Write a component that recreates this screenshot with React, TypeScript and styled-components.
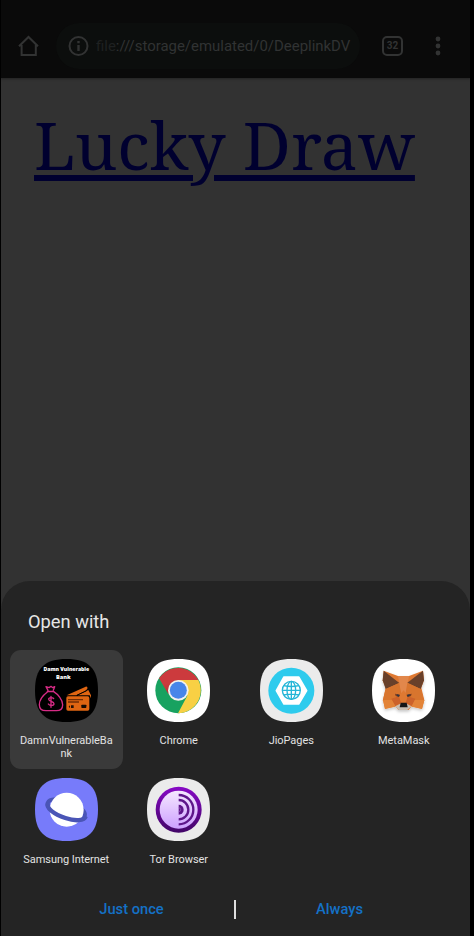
import React from 'react';
import styled, { createGlobalStyle } from 'styled-components';

const GlobalStyle = createGlobalStyle`
  * { box-sizing: border-box; }
  html, body { margin: 0; background: #000; }
`;

const Screen = styled.div`
  width: 469px;
  height: 936px;
  margin-left: 1px;
  display: flex;
  flex-direction: column;
  overflow: hidden;
  background: #323232;
  font-family: Roboto, sans-serif;
`;

const Toolbar = styled.header`
  height: 78px;
  flex: none;
  display: flex;
  align-items: center;
  padding: 14px 0 0 15px;
  background: #0a0a0a;
  box-shadow: 0 1px 2px #222;
  color: #323333;
`;

const ToolbarIcon = styled.svg`
  width: 24px;
  height: 24px;
  flex: none;
  fill: none;
  stroke: currentColor;
  stroke-width: 2;
`;

const AddressBar = styled.div`
  width: 304px;
  height: 46px;
  flex: none;
  margin: 0 22px 0 16px;
  padding-left: 10px;
  display: flex;
  align-items: center;
  border-radius: 23px;
  background: #0c0e0d;
`;

const Address = styled.span`
  width: 256px;
  margin-left: 6px;
  overflow: hidden;
  white-space: nowrap;
  font-size: 14.95px;
  line-height: 20px;
  color: #313333;
`;

const Scheme = styled.span`
  color: #1f2121;
`;

const TabCount = styled.div`
  width: 21px;
  height: 20px;
  margin-right: 32px;
  border: 2px solid currentColor;
  border-radius: 5px;
  font-size: 10px;
  font-weight: 700;
  line-height: 16px;
  text-align: center;
`;

const MenuIcon = styled.svg`
  width: 6px;
  height: 20px;
  fill: currentColor;
`;

const Page = styled.main`
  flex: 1;
  padding: 24px 0 0 33px;
`;

const PageLink = styled.a`
  display: inline-block;
  white-space: nowrap;
  font-family: 'Noto Serif', 'Droid Serif', 'DejaVu Serif Condensed', 'DejaVu Serif', serif;
  font-stretch: condensed;
  font-size: 66.1px;
  line-height: 84px;
  color: #00002f;
  text-decoration: underline;
  text-decoration-thickness: 6px;
  text-underline-offset: 5px;
`;

const Sheet = styled.section`
  height: 355px;
  flex: none;
  display: flex;
  flex-direction: column;
  border-radius: 29px 29px 0 0;
  background: #242424;
`;

const SheetTitle = styled.h2`
  margin: 29px 0 0 27px;
  height: 40px;
  font-size: 18.3px;
  font-weight: 400;
  line-height: 23px;
  color: #e6e6e6;
`;

const AppGrid = styled.div`
  display: grid;
  grid-template-columns: repeat(4, 112.5px);
  grid-template-rows: 119px 119px;
  padding-left: 9px;
`;

const AppTile = styled.button<{ $selected?: boolean }>`
  display: flex;
  flex-direction: column;
  align-items: center;
  border: 0;
  padding: 9px 6px 0;
  border-radius: 11px;
  background: ${(p) => (p.$selected ? '#3a3a3a' : 'transparent')};
  font-family: inherit;
`;

const AppIcon = styled.svg`
  width: 63px;
  height: 63px;
  flex: none;
`;

const AppName = styled.span`
  margin-top: 12px;
  width: 97px;
  font-size: 11px;
  letter-spacing: -0.05px;
  line-height: 13px;
  text-align: center;
  word-break: break-all;
  color: #e2e2e2;
`;

const Actions = styled.div`
  height: 42px;
  display: grid;
  grid-template-columns: 233px 2px 1fr;
  align-items: center;
  padding: 0 27px 0 0;
`;

const Action = styled.button<{ $side: 'left' | 'right' }>`
  border: 0;
  padding: ${(p) => (p.$side === 'left' ? '0 0 0 28px' : '0')};
  background: none;
  font-family: inherit;
  font-size: 14.7px;
  font-weight: 500;
  line-height: 20px;
  color: #1471c6;
`;

const Divider = styled.i`
  height: 19px;
  width: 1.5px;
  margin: 0;
  background: #dedede;
`;

const Squircle = ({ fill }: { fill: string }) => (
  <path
    fill={fill}
    d="M94.5 0C161 0 189 28 189 94.5S161 189 94.5 189 0 161 0 94.5 28 0 94.5 0Z"
  />
);

const BankIcon = () => (
  <AppIcon viewBox="0 0 189 189">
    <Squircle fill="#000" />
    <g fill="#fff" fontFamily="Open Sans, sans-serif" fontWeight="800" fontSize="15" textAnchor="middle">
      <text x="94" y="36" textLength="137" lengthAdjust="spacingAndGlyphs">Damn Vulnerable</text>
      <text x="85" y="59" textLength="44" lengthAdjust="spacingAndGlyphs">Bank</text>
    </g>
    <g fill="none" stroke="#d52b85" strokeWidth="4" strokeLinecap="round" strokeLinejoin="round">
      <path d="M38 98C26 107 13 122 13 137c0 13 8 18 20 18h31c12 0 19-6 19-18 0-15-14-31-27-39Z" />
      <path d="M37 97h19M39 94l-6-11 9 3 6-4 5 4 6-3-4 11" />
      <path d="M56 119c-2-4-15-5-15 2 0 8 16 5 16 13 0 7-14 7-17 1M48 112v33" />
    </g>
    <g fill="#df6512">
      <path d="M95 109l57-26c4-1 6 2 5 6l-6 7-26 13Z" />
      <path d="M128 109l32-16 8 16v9l-4-9Z" />
      <rect x="94" y="112" width="69" height="43" rx="5" />
    </g>
    <path d="M125 109l30-14" stroke="#000" strokeWidth="3" />
    <path d="M99 122h45M99 129h33" stroke="#712d05" strokeWidth="4" />
    <path d="M101 143l4-4v8ZM108 139h8v8h-8Z" fill="#231006" />
    <rect x="139" y="137" width="15" height="10" rx="2" fill="#170b04" />
  </AppIcon>
);

const ChromeIcon = () => (
  <AppIcon viewBox="0 0 189 189">
    <defs>
      <linearGradient id="chromeRed" x1="0" y1="0" x2="0" y2="1">
        <stop offset=".6" stopColor="#cc3a3d" />
        <stop offset="1" stopColor="#b7312f" />
      </linearGradient>
    </defs>
    <Squircle fill="#fff" />
    <circle cx="94" cy="94" r="69" fill="#18a260" />
    <path d="M94 63h60A69 69 0 0 1 93 163L121 110Z" fill="#f8d044" />
    <path d="M36 58A69 69 0 0 1 154 63H94L64 105Z" fill="url(#chromeRed)" />
    <circle cx="94" cy="94" r="31" fill="#f3f2ee" />
    <circle cx="94" cy="94" r="25.5" fill="#4786e9" />
  </AppIcon>
);

const JioIcon = () => (
  <AppIcon viewBox="0 0 189 189">
    <Squircle fill="#ebebeb" />
    <circle cx="94" cy="95" r="69" fill="#2ecbed" />
    <path d="M72 54h44l24 41-24 40H72L49 95Z" fill="#fff" stroke="#fff" strokeWidth="5" strokeLinejoin="round" />
    <g fill="none" stroke="#25b6d7" strokeWidth="4">
      <circle cx="94" cy="94" r="27" />
      <ellipse cx="94" cy="94" rx="13" ry="27" />
      <path d="M94 67v54M67 94h54M71 80q23 5 46 0M71 108q23-5 46 0" />
    </g>
  </AppIcon>
);

const MetaMaskIcon = () => (
  <AppIcon viewBox="0 0 189 189">
    <defs>
      <filter id="foxShadow" x="-20%" y="-20%" width="140%" height="150%">
        <feDropShadow dx="0" dy="5" stdDeviation="4" floodOpacity=".22" />
      </filter>
    </defs>
    <Squircle fill="#fff" />
    <g filter="url(#foxShadow)">
      <path d="M35 35L78 51h33l42-16 3 29-8 22 9 38-7 25-31-7-9 11H79l-9-11-31 7-6-26 8-37-9-21Z" fill="#df7932" />
      <path d="M78 51h33l-9 52-7-9-8 9Z" fill="#e2874b" />
      <path d="M35 35l47 37-41 18-9-26Z" fill="#69402a" />
      <path d="M153 35l-47 36 40 19 10-26Z" fill="#69402a" />
      <path d="M41 90l40-18 6 31-28 24-27-2Z" fill="#d8742f" />
      <path d="M146 90l-40-18-5 31 29 24 27-2Z" fill="#d8742f" />
      <path d="M33 123h36l1 20-31 7Z" fill="#e38438" />
      <path d="M157 123h-37l-1 20 31 7Z" fill="#e38438" />
      <path d="M58 119l23-7 6 20-17 9ZM130 119l-23-7-6 20 18 9Z" fill="#cc6229" />
      <path d="M70 142l15-8h19l14 8-12 11H80Z" fill="#c9beb2" />
      <path d="M86 131h18l3 14H83Z" fill="#171719" />
      <path d="M69 104l15 3-3 7-10-3ZM119 104l-16 3 4 7 10-3Z" fill="#763e24" />
      <path d="M75 106l8 2-2 5-6-2ZM113 106l-8 2 2 5 6-2Z" fill="#303643" />
    </g>
  </AppIcon>
);

const SamsungIcon = () => (
  <AppIcon viewBox="0 0 189 189">
    <Squircle fill="#777bfa" />
    <ellipse cx="94" cy="94" rx="59" ry="24" transform="rotate(20 94 94)" fill="none" stroke="#4a55b6" strokeWidth="12" />
    <circle cx="95" cy="95" r="51" fill="#fff" />
    <path
      d="M39 74C31 91 59 109 91 120c29 10 57 9 61-5"
      fill="none"
      stroke="#4a55b6"
      strokeWidth="13"
    />
  </AppIcon>
);

const TorIcon = () => (
  <AppIcon viewBox="0 0 189 189">
    <defs>
      <linearGradient id="torRing" x1="0" y1="0" x2="0" y2="1">
        <stop stopColor="#8709c6" />
        <stop offset="1" stopColor="#420667" />
      </linearGradient>
      <linearGradient id="torFace" x1="0" y1="0" x2="0" y2="1">
        <stop stopColor="#f5e8ff" />
        <stop offset="1" stopColor="#cda0ff" />
      </linearGradient>
    </defs>
    <Squircle fill="#ebebeb" />
    <circle cx="95" cy="95" r="69" fill="url(#torRing)" />
    <circle cx="95" cy="95" r="57" fill="url(#torFace)" />
    <g fill="none" stroke="#5e168a" strokeWidth="7">
      <path d="M95 51a44 44 0 0 1 0 88M95 66a29 29 0 0 1 0 58" />
    </g>
    <path d="M95 80a15 15 0 0 1 0 30Z" fill="#5e168a" />
    <path d="M95 89a6 6 0 0 1 0 12" fill="none" stroke="#9e62c4" strokeWidth="2" />
  </AppIcon>
);

const apps = [
  { name: 'DamnVulnerableBank', Icon: BankIcon },
  { name: 'Chrome', Icon: ChromeIcon },
  { name: 'JioPages', Icon: JioIcon },
  { name: 'MetaMask', Icon: MetaMaskIcon },
  { name: 'Samsung Internet', Icon: SamsungIcon },
  { name: 'Tor Browser', Icon: TorIcon },
];

export default function App() {
  return (
    <>
      <GlobalStyle />
      <Screen>
        <Toolbar>
          <ToolbarIcon viewBox="0 0 24 24">
            <path d="M3 12.3L12.5 3 22 12.3M5.6 11v9.9h14.2V11" />
          </ToolbarIcon>
          <AddressBar>
            <ToolbarIcon viewBox="0 0 24 24">
              <circle cx="12.5" cy="12" r="9" />
              <path d="M12.5 11v6M12.5 7v2.2" strokeWidth="2.4" />
            </ToolbarIcon>
            <Address>
              <Scheme>file</Scheme>:///storage/emulated/0/DeeplinkDV
            </Address>
          </AddressBar>
          <TabCount>32</TabCount>
          <MenuIcon viewBox="0 0 6 20">
            <circle cx="3" cy="3" r="2.4" />
            <circle cx="3" cy="10" r="2.4" />
            <circle cx="3" cy="17" r="2.4" />
          </MenuIcon>
        </Toolbar>
        <Page>
          <PageLink>Lucky Draw</PageLink>
        </Page>
        <Sheet>
          <SheetTitle>Open with</SheetTitle>
          <AppGrid>
            {apps.map(({ name, Icon }, i) => (
              <AppTile key={name} $selected={i === 0}>
                <Icon />
                <AppName>{name}</AppName>
              </AppTile>
            ))}
          </AppGrid>
          <Actions>
            <Action $side="left">Just once</Action>
            <Divider />
            <Action $side="right">Always</Action>
          </Actions>
        </Sheet>
      </Screen>
    </>
  );
}
